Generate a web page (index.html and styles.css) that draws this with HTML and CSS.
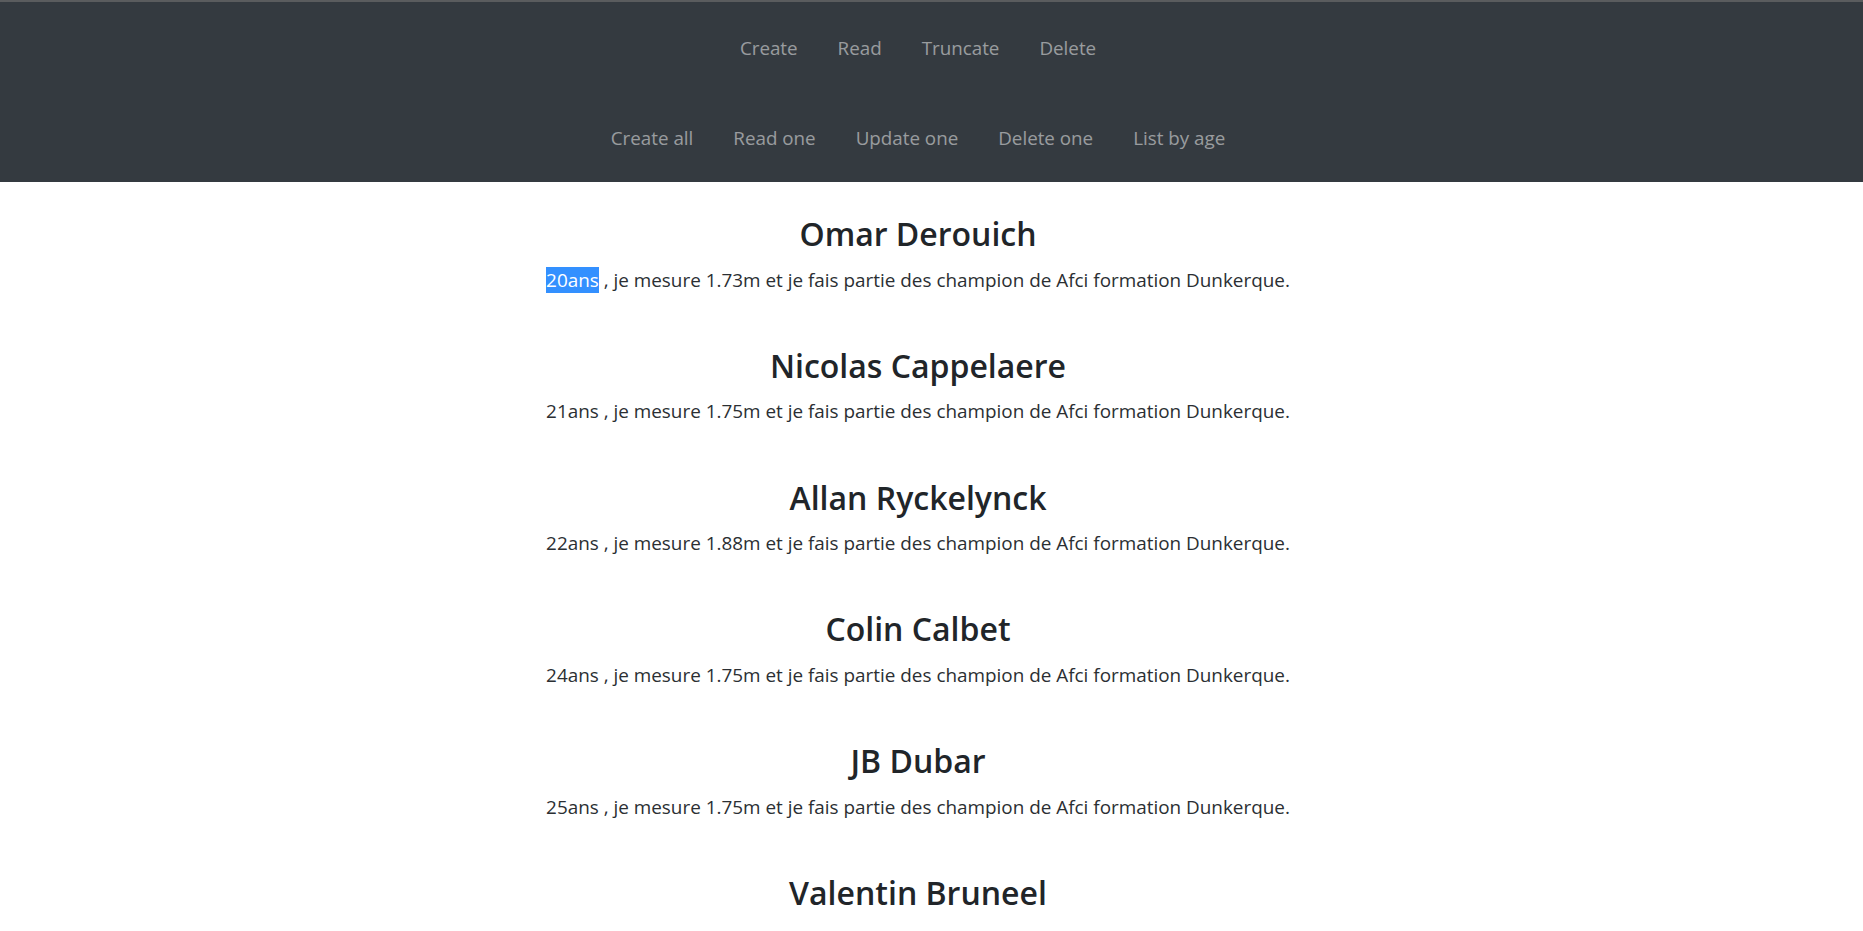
FILE: index.html
```html
<!DOCTYPE html>
<html lang="fr">
<head>
<meta charset="utf-8">
<title>Champions</title>
<link rel="stylesheet" href="styles.css">
</head>
<body>
<nav class="navbar">
  <ul class="nav-row">
    <li><a class="nav-link" href="#">Create</a></li>
    <li><a class="nav-link" href="#">Read</a></li>
    <li><a class="nav-link" href="#">Truncate</a></li>
    <li><a class="nav-link" href="#">Delete</a></li>
  </ul>
  <ul class="nav-row">
    <li><a class="nav-link" href="#">Create all</a></li>
    <li><a class="nav-link" href="#">Read one</a></li>
    <li><a class="nav-link" href="#">Update one</a></li>
    <li><a class="nav-link" href="#">Delete one</a></li>
    <li><a class="nav-link" href="#">List by age</a></li>
  </ul>
</nav>
<main class="list">
  <section class="person">
    <h3 class="name">Omar Derouich</h3>
    <p class="desc"><span class="selected">20ans</span> , je mesure 1.73m et je fais partie des champion de Afci formation Dunkerque.</p>
  </section>
  <section class="person">
    <h3 class="name">Nicolas Cappelaere</h3>
    <p class="desc">21ans , je mesure 1.75m et je fais partie des champion de Afci formation Dunkerque.</p>
  </section>
  <section class="person">
    <h3 class="name">Allan Ryckelynck</h3>
    <p class="desc">22ans , je mesure 1.88m et je fais partie des champion de Afci formation Dunkerque.</p>
  </section>
  <section class="person">
    <h3 class="name">Colin Calbet</h3>
    <p class="desc">24ans , je mesure 1.75m et je fais partie des champion de Afci formation Dunkerque.</p>
  </section>
  <section class="person">
    <h3 class="name">JB Dubar</h3>
    <p class="desc">25ans , je mesure 1.75m et je fais partie des champion de Afci formation Dunkerque.</p>
  </section>
  <section class="person">
    <h3 class="name">Valentin Bruneel</h3>
  </section>
</main>
</body>
</html>
```
FILE: styles.css
```css
* { box-sizing: border-box; }
html, body { margin: 0; padding: 0; }
body {
  font-family: "Open Sans", "Noto Sans", sans-serif;
  color: #212529;
  background: #fff;
  overflow: hidden;
}
.navbar {
  background: #343a40;
  border-top: 2px solid #5a5c5e;
  padding: 22px 27px 19px 0;
  display: flex;
  flex-direction: column;
  align-items: center;
  gap: 41px;
  height: 182px;
}
.nav-row {
  list-style: none;
  margin: 0;
  padding: 0;
  display: flex;
  justify-content: center;
}
.nav-link {
  display: block;
  padding: 10px 20px;
  font-size: 18.8px;
  line-height: 28.8px;
  color: rgba(255, 255, 255, 0.5);
  text-decoration: none;
}
.list {
  padding: 32px 27px 0 0;
  display: flex;
  flex-direction: column;
  align-items: center;
}
.person {
  display: flex;
  flex-direction: column;
  align-items: center;
  text-align: center;
}
.name {
  margin: 0 0 12px;
  font-size: 32px;
  font-weight: 600;
  line-height: 39.6px;
  color: #212529;
}
.desc {
  margin: 0 0 51.4px;
  font-size: 18.9px;
  line-height: 28.8px;
  color: #2b2f33;
}
.selected {
  background: #3390ff;
  color: #fff;
}
```
